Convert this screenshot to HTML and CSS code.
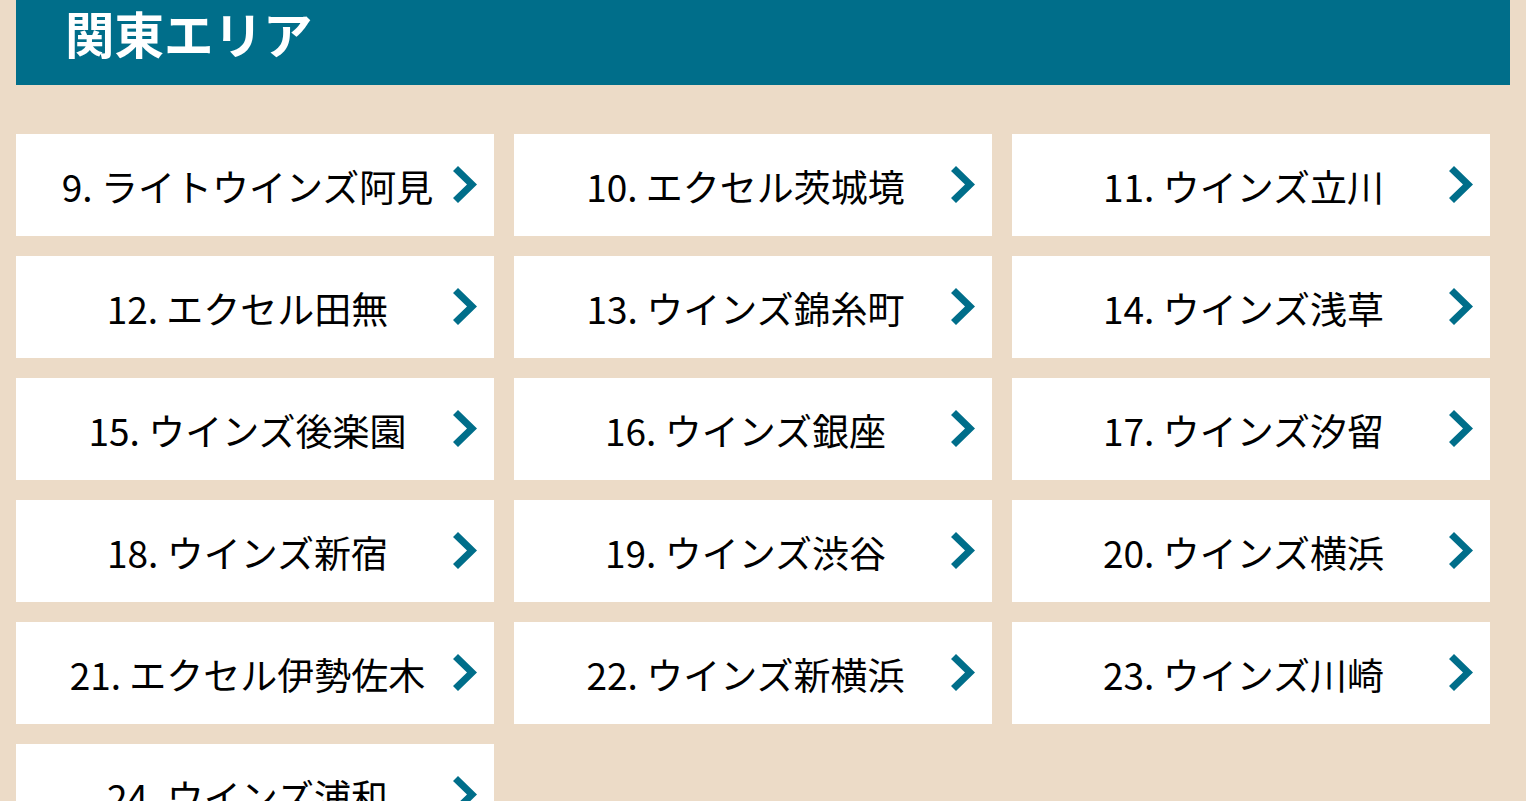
FILE: index.html
```html
<!DOCTYPE html>
<html lang="ja">
<head>
<meta charset="utf-8">
<title>関東エリア</title>
<link rel="stylesheet" href="styles.css">
</head>
<body>
<div class="page">
  <h2 class="area-title">関東エリア</h2>
  <ul class="shop-grid">
    <li class="shop"><a href="#"><span>9. ライトウインズ阿見</span><svg class="chev" viewBox="0 0 24 37"><polygon points="0,5 5,0 24,18.5 5,37 0,32 14,18.5"/></svg></a></li>
    <li class="shop"><a href="#"><span>10. エクセル茨城境</span><svg class="chev" viewBox="0 0 24 37"><polygon points="0,5 5,0 24,18.5 5,37 0,32 14,18.5"/></svg></a></li>
    <li class="shop"><a href="#"><span>11. ウインズ立川</span><svg class="chev" viewBox="0 0 24 37"><polygon points="0,5 5,0 24,18.5 5,37 0,32 14,18.5"/></svg></a></li>
    <li class="shop"><a href="#"><span>12. エクセル田無</span><svg class="chev" viewBox="0 0 24 37"><polygon points="0,5 5,0 24,18.5 5,37 0,32 14,18.5"/></svg></a></li>
    <li class="shop"><a href="#"><span>13. ウインズ錦糸町</span><svg class="chev" viewBox="0 0 24 37"><polygon points="0,5 5,0 24,18.5 5,37 0,32 14,18.5"/></svg></a></li>
    <li class="shop"><a href="#"><span>14. ウインズ浅草</span><svg class="chev" viewBox="0 0 24 37"><polygon points="0,5 5,0 24,18.5 5,37 0,32 14,18.5"/></svg></a></li>
    <li class="shop"><a href="#"><span>15. ウインズ後楽園</span><svg class="chev" viewBox="0 0 24 37"><polygon points="0,5 5,0 24,18.5 5,37 0,32 14,18.5"/></svg></a></li>
    <li class="shop"><a href="#"><span>16. ウインズ銀座</span><svg class="chev" viewBox="0 0 24 37"><polygon points="0,5 5,0 24,18.5 5,37 0,32 14,18.5"/></svg></a></li>
    <li class="shop"><a href="#"><span>17. ウインズ汐留</span><svg class="chev" viewBox="0 0 24 37"><polygon points="0,5 5,0 24,18.5 5,37 0,32 14,18.5"/></svg></a></li>
    <li class="shop"><a href="#"><span>18. ウインズ新宿</span><svg class="chev" viewBox="0 0 24 37"><polygon points="0,5 5,0 24,18.5 5,37 0,32 14,18.5"/></svg></a></li>
    <li class="shop"><a href="#"><span>19. ウインズ渋谷</span><svg class="chev" viewBox="0 0 24 37"><polygon points="0,5 5,0 24,18.5 5,37 0,32 14,18.5"/></svg></a></li>
    <li class="shop"><a href="#"><span>20. ウインズ横浜</span><svg class="chev" viewBox="0 0 24 37"><polygon points="0,5 5,0 24,18.5 5,37 0,32 14,18.5"/></svg></a></li>
    <li class="shop"><a href="#"><span>21. エクセル伊勢佐木</span><svg class="chev" viewBox="0 0 24 37"><polygon points="0,5 5,0 24,18.5 5,37 0,32 14,18.5"/></svg></a></li>
    <li class="shop"><a href="#"><span>22. ウインズ新横浜</span><svg class="chev" viewBox="0 0 24 37"><polygon points="0,5 5,0 24,18.5 5,37 0,32 14,18.5"/></svg></a></li>
    <li class="shop"><a href="#"><span>23. ウインズ川崎</span><svg class="chev" viewBox="0 0 24 37"><polygon points="0,5 5,0 24,18.5 5,37 0,32 14,18.5"/></svg></a></li>
    <li class="shop"><a href="#"><span>24. ウインズ浦和</span><svg class="chev" viewBox="0 0 24 37"><polygon points="0,5 5,0 24,18.5 5,37 0,32 14,18.5"/></svg></a></li>
  </ul>
</div>
</body>
</html>
```

FILE: styles.css
```css
html, body {
  margin: 0;
  padding: 0;
  background: #ecdbc7;
}
body {
  font-family: "Noto Sans CJK JP", "Noto Sans", sans-serif;
  color: #000;
}
.page {
  padding: 0 16px;
}
.area-title {
  margin: 0;
  height: 85px;
  box-sizing: border-box;
  background: #006e8a;
  color: #fff;
  font-size: 49.5px;
  font-weight: 700;
  line-height: 66px;
  padding-left: 49px;
}
.shop-grid {
  list-style: none;
  margin: 49px 20px 0 0;
  padding: 0;
  display: grid;
  grid-template-columns: repeat(3, 1fr);
  gap: 20px;
}
.shop a {
  position: relative;
  display: flex;
  align-items: center;
  justify-content: center;
  height: 102px;
  background: #fff;
  color: #000;
  text-decoration: none;
  padding: 0 30px 0 15px;
  box-sizing: border-box;
  font-size: 37px;
  line-height: 1;
  white-space: nowrap;
}
.shop a span {
  padding-top: 2px;
}
.chev {
  position: absolute;
  right: 17px;
  top: 32px;
  width: 24px;
  height: 37px;
  fill: #006e8a;
}
```
